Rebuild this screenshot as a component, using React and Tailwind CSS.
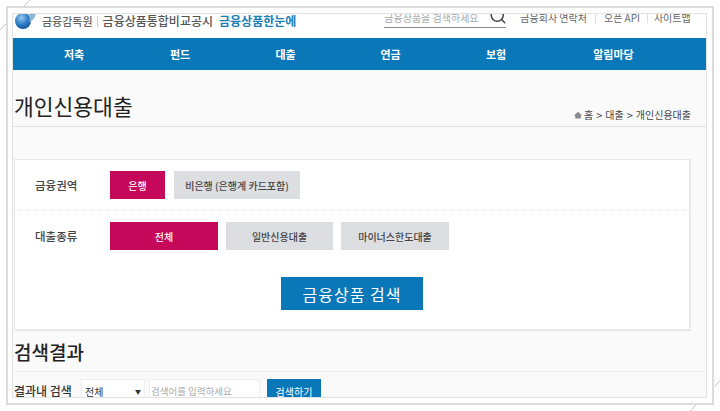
import { Search } from 'lucide-react'

const FONT = "font-['Noto_Sans_CJK_KR','Liberation_Sans',sans-serif]"

const navItems = [
  { label: '저축', w: 'w-[106px]' },
  { label: '펀드', w: 'w-[106px]' },
  { label: '대출', w: 'w-[105px]' },
  { label: '연금', w: 'w-[105px]' },
  { label: '보험', w: 'w-[106px]' },
  { label: '알림마당', w: 'w-[129px]' },
]

function Corner({ className }) {
  return (
    <svg className={`absolute ${className}`} width="30" height="30" viewBox="0 0 30 30">
      <line x1="0" y1="30" x2="30" y2="0" stroke="#c4c4c4" strokeWidth="1" />
    </svg>
  )
}

function Option({ active, className, children }) {
  return (
    <div
      className={`h-7 flex items-center justify-center text-[10px] font-medium ${
        active ? 'bg-[#c5085a] text-white' : 'bg-[#dddee2] text-[#444]'
      } ${className}`}
    >
      {children}
    </div>
  )
}

export default function App() {
  return (
    <div className={`${FONT} relative w-[720px] h-[411px] overflow-hidden bg-white pt-[6px] pl-[6px] pr-[6px] pb-[6px]`}>
      <Corner className="left-0 top-0" />
      <Corner className="right-0 bottom-0" />

      {/* outer frame */}
      <div className="relative h-[399px] border-2 border-[#dcdcdc] bg-white pt-[5px] pl-[4px] pr-[4px] pb-[5px]">
        {/* inner frame */}
        <div className="h-[385px] w-[695px] border border-[#e2e2e2] overflow-hidden bg-[#fafafa]">
          {/* top bar */}
          <div className="h-[24px] bg-white flex items-start overflow-hidden">
            <svg className="-mt-[4px] ml-px shrink-0" width="24" height="20" viewBox="0 0 24 20">
              <defs>
                <radialGradient id="ball" cx="40%" cy="30%" r="75%">
                  <stop offset="0%" stopColor="#9cc9ef" />
                  <stop offset="55%" stopColor="#2f7fc8" />
                  <stop offset="100%" stopColor="#0e4f96" />
                </radialGradient>
              </defs>
              <circle cx="9" cy="11" r="8" fill="url(#ball)" />
              <path d="M15 12 C19 11 21 8 22 3 L14 3 C16 6 16 9 15 12 Z" fill="#8fb6d8" />
            </svg>
            <div className="ml-[4px] flex items-center h-[14px] leading-[14px] whitespace-nowrap">
              <span className="text-[11px] font-medium text-[#666]">금융감독원</span>
              <span className="ml-[4px] h-[11px] w-px bg-[#ccc]" />
              <span className="ml-[5px] text-[12px] font-medium text-[#555]">금융상품통합비교공시</span>
              <span className="ml-[6px] text-[12px] font-bold text-[#1a7fb5]">금융상품한눈에</span>
            </div>
            <div className="ml-[88px] w-[122px] h-[14px] border-b border-[#888] flex items-start">
              <span className="-mt-[2px] text-[10px] leading-[12px] text-[#aaa] whitespace-nowrap">금융상품을 검색하세요</span>
              <Search className="ml-[10px] -mt-[7px] shrink-0 text-[#444]" size={18} strokeWidth={2} />
            </div>
            <div className="ml-[14px] -mt-[2px] flex items-start text-[10px] leading-[12px] text-[#666] whitespace-nowrap">
              <span>금융회사 연락처</span>
              <span className="ml-[8px] mr-[8px] h-[11px] w-px bg-[#ddd]" />
              <span>오픈 API</span>
              <span className="ml-[7px] mr-[6px] h-[11px] w-px bg-[#ddd]" />
              <span>사이트맵</span>
            </div>
          </div>

          {/* nav */}
          <nav className="h-[32px] bg-[#0a77b8] flex pl-[8px]">
            {navItems.map((item) => (
              <div
                key={item.label}
                className={`${item.w} flex items-center justify-center text-[11px] font-bold text-white`}
              >
                {item.label}
              </div>
            ))}
          </nav>

          {/* title */}
          <div className="h-[57px] border-b border-[#e2e2e2] flex items-start justify-between pt-[21px] pl-px pr-[15px]">
            <h1 className="text-[21.5px] leading-[30px] text-[#222]">개인신용대출</h1>
            <div className="mt-[17px] flex items-center text-[10px] leading-[14px] text-[#444] whitespace-nowrap">
              <svg width="8" height="8" viewBox="0 0 10 10" className="mr-[2px]">
                <path d="M5 1 L10 5.5 H8.5 V9.5 H1.5 V5.5 H0 Z" fill="#888" />
              </svg>
              <span>홈</span>
              <span className="mx-[3px] text-[11px]">&gt;</span>
              <span>대출</span>
              <span className="mx-[3px] text-[11px]">&gt;</span>
              <span>개인신용대출</span>
            </div>
          </div>

          {/* filter card */}
          <div className="mt-[32px] ml-px w-[677px] h-[172px] border-2 border-t border-l border-[#e9e9e9] bg-white">
            <div className="h-[51px] border-b border-dotted border-[#e4e4e4] flex items-center pl-[20px]">
              <span className="w-[75px] pt-px text-[11.5px] font-medium text-[#444]">금융권역</span>
              <Option active className="w-[55px]">은행</Option>
              <Option className="w-[126px] ml-[9px]">비은행 (은행계 카드포함)</Option>
            </div>
            <div className="h-[50px] flex items-center pl-[20px]">
              <span className="w-[75px] pt-px text-[11.5px] font-medium text-[#444]">대출종류</span>
              <Option active className="w-[108px]">전체</Option>
              <Option className="w-[107px] ml-[8px]">일반신용대출</Option>
              <Option className="w-[108px] ml-[8px]">마이너스한도대출</Option>
            </div>
            <div className="flex justify-center mt-[16px]">
              <button className="w-[142px] h-[33px] bg-[#0a77b8] text-white text-[16px] tracking-[1px]">
                금융상품 검색
              </button>
            </div>
          </div>

          {/* results */}
          <h2 className="mt-[7px] ml-px h-[34px] w-[688px] border-b border-[#ececec] text-[19px] leading-[28px] font-medium text-[#222]">
            검색결과
          </h2>
          <div className="mt-[7px] ml-px flex items-start">
            <span className="w-[67px] text-[12px] leading-[24px] font-medium text-[#333] whitespace-nowrap">결과내 검색</span>
            <div className="w-[64px] h-[24px] border border-[#eee] bg-white flex items-center justify-between pl-[3px] pr-[3px] text-[10px] text-[#333]">
              <span>전체</span>
              <span className="text-[6px]">▼</span>
            </div>
            <div className="ml-[4px] w-[111px] h-[24px] border border-[#eee] bg-white pl-px text-[9.5px] leading-[22px] text-[#aaa] whitespace-nowrap">
              검색어를 입력하세요
            </div>
            <button className="ml-[7px] w-[54px] h-[24px] bg-[#0a77b8] text-white text-[10px]">검색하기</button>
          </div>
        </div>
      </div>
    </div>
  )
}
